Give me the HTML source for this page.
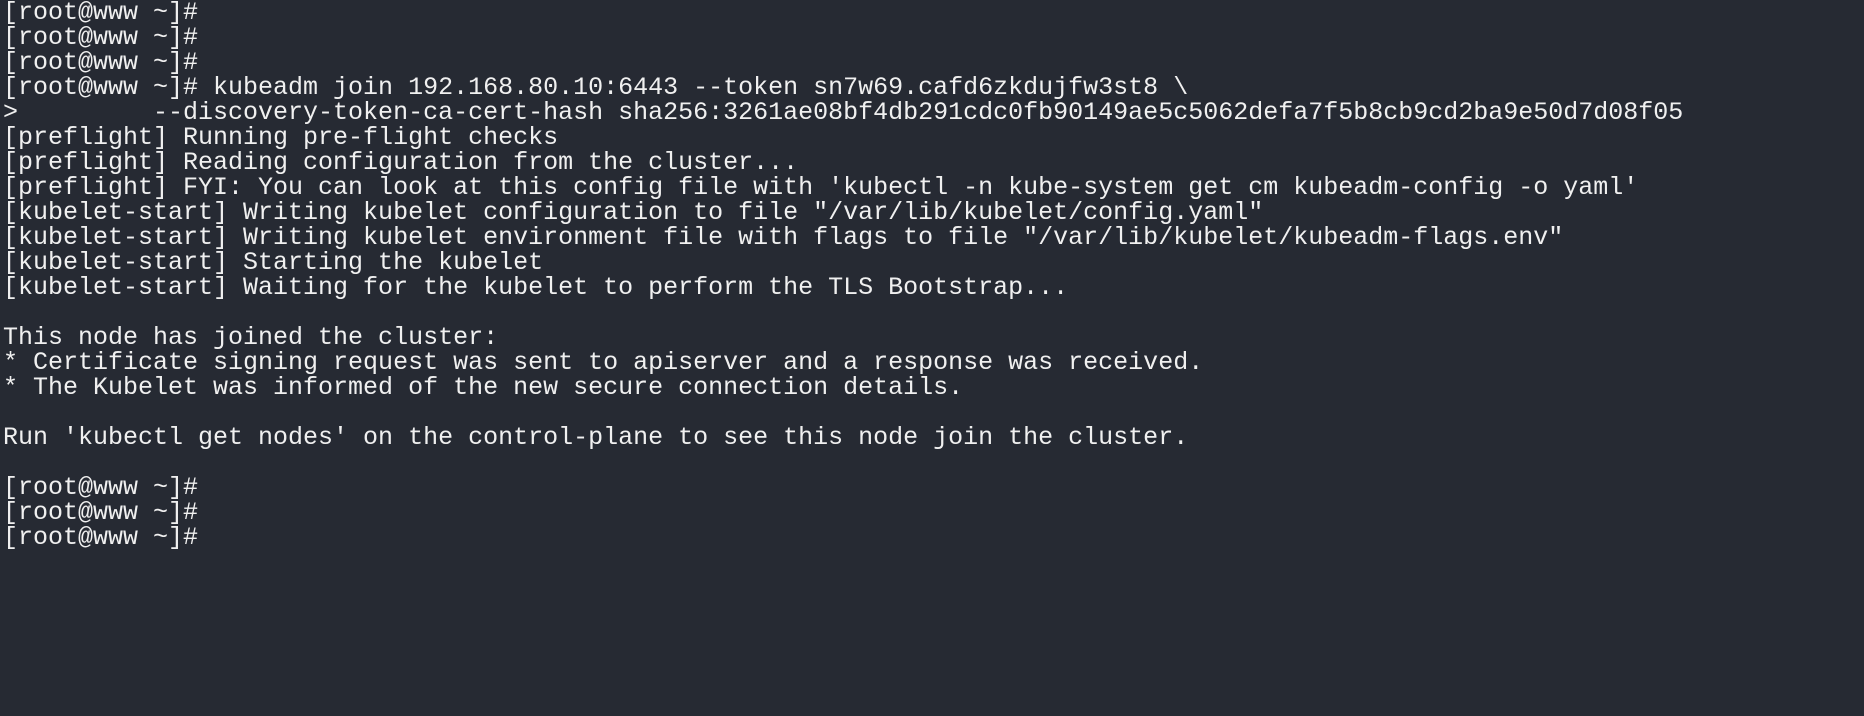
<!DOCTYPE html>
<html><head><meta charset="utf-8"><style>
html,body{margin:0;padding:0;background:#262a33;width:1864px;height:716px;overflow:hidden}
pre{margin:0;padding:0 0 0 3px;font-family:"Liberation Mono",monospace;font-size:25px;line-height:25px;color:#f0f0f0;letter-spacing:0;position:relative;top:0}
</style></head><body><pre>[root@www ~]#
[root@www ~]#
[root@www ~]#
[root@www ~]# kubeadm join 192.168.80.10:6443 --token sn7w69.cafd6zkdujfw3st8 \
>         --discovery-token-ca-cert-hash sha256:3261ae08bf4db291cdc0fb90149ae5c5062defa7f5b8cb9cd2ba9e50d7d08f05
[preflight] Running pre-flight checks
[preflight] Reading configuration from the cluster...
[preflight] FYI: You can look at this config file with 'kubectl -n kube-system get cm kubeadm-config -o yaml'
[kubelet-start] Writing kubelet configuration to file "/var/lib/kubelet/config.yaml"
[kubelet-start] Writing kubelet environment file with flags to file "/var/lib/kubelet/kubeadm-flags.env"
[kubelet-start] Starting the kubelet
[kubelet-start] Waiting for the kubelet to perform the TLS Bootstrap...

This node has joined the cluster:
* Certificate signing request was sent to apiserver and a response was received.
* The Kubelet was informed of the new secure connection details.

Run 'kubectl get nodes' on the control-plane to see this node join the cluster.

[root@www ~]#
[root@www ~]#
[root@www ~]#</pre></body></html>
